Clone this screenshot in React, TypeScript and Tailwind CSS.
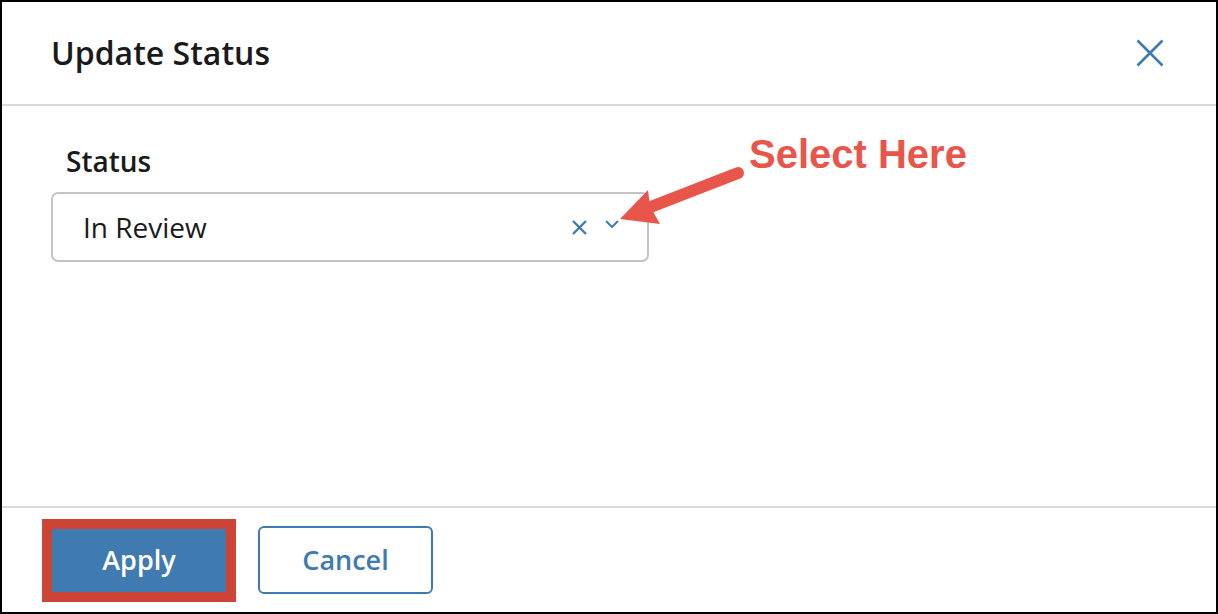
const CloseIcon = ({ className }: { className?: string }) => (
  <svg viewBox="0 0 28 28" className={className} fill="none" stroke="currentColor" strokeWidth="2.6">
    <path d="M1.5 1.5 L26.5 26.5 M26.5 1.5 L1.5 26.5" />
  </svg>
);

const ClearIcon = () => (
  <svg viewBox="0 0 15 15" className="w-[15px] h-[15px] text-[#3f7bb0]" fill="none" stroke="currentColor" strokeWidth="2.4">
    <path d="M1 1 L14 14 M14 1 L1 14" />
  </svg>
);

const Chevron = () => (
  <svg viewBox="0 0 14 8" className="w-[14px] h-[8px] text-[#3f7bb0]" fill="none" stroke="currentColor" strokeWidth="2">
    <path d="M1 1 L7 7 L13 1" />
  </svg>
);

// red annotation arrow pointing at the dropdown toggle
const Annotation = () => (
  <>
    <svg className="absolute -top-[2px] -left-[2px] w-[1218px] h-[614px] pointer-events-none" viewBox="0 0 1218 614">
      <path d="M738 173 L648 208" stroke="#e8564b" strokeWidth="12" strokeLinecap="round" fill="none" />
      <polygon points="620,219 648,190 650,206 660,224" fill="#e8564b" />
    </svg>
    <span className="absolute left-[747px] top-[132px] text-[40px] leading-none font-bold text-[#e8564b] font-['Liberation_Sans',Arial,sans-serif]">
      Select Here
    </span>
  </>
);

export default function App() {
  return (
    <div className="relative w-[1218px] h-[614px] bg-white border-2 border-black flex flex-col font-['Open_Sans',sans-serif] text-[#1a1a1a]">
      {/* Header */}
      <div className="h-[104px] shrink-0 flex items-center justify-between pl-[49px] pr-[52px] border-b-2 border-[#d7dbde]">
        <h1 className="text-[32px] font-semibold">Update Status</h1>
        <CloseIcon className="w-[28px] h-[28px] text-[#3f7bb0]" />
      </div>

      {/* Body */}
      <div className="flex-1 pl-[49px] pt-[36px]">
        <label className="block pl-[15px] text-[28px] font-semibold leading-[38px]">Status</label>
        <div className="mt-[12px] w-[598px] h-[70px] border-2 border-[#c4c4c4] rounded-[7px] flex items-center pl-[30px] pr-[28px]">
          <span className="flex-1 text-[28px]">In Review</span>
          <div className="mr-[18px]">
            <ClearIcon />
          </div>
          <div className="-mt-[6px]">
            <Chevron />
          </div>
        </div>
      </div>

      {/* Footer */}
      <div className="h-[106px] shrink-0 flex items-center gap-[22px] pl-[40px] border-t-2 border-[#d7dbde]">
        <div className="border-[10px] border-[#cd4437]">
          <button className="w-[174px] h-[63px] bg-[#3f7bb0] text-white text-[27px] font-semibold">Apply</button>
        </div>
        <button className="w-[175px] h-[68px] border-2 border-[#3f7bb0] rounded-[6px] text-[#3f7bb0] text-[27px] font-semibold">
          Cancel
        </button>
      </div>

      <Annotation />
    </div>
  );
}
